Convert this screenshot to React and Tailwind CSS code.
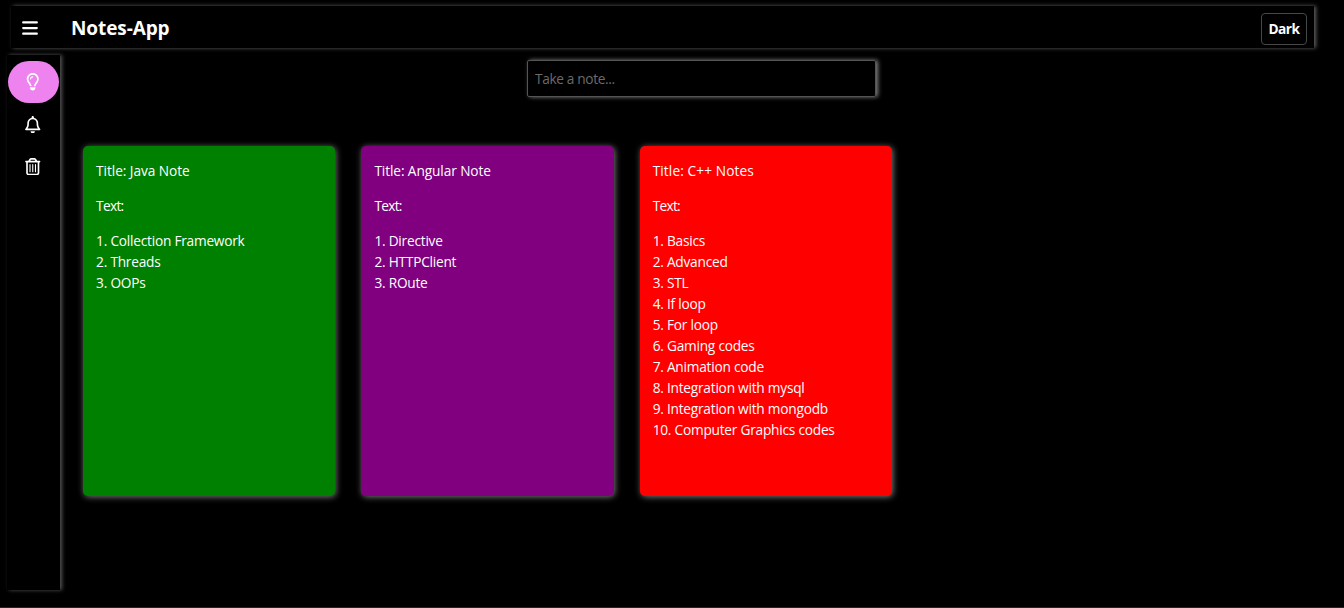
import { FaBars, FaRegLightbulb, FaRegBell, FaRegTrashCan } from "react-icons/fa6";

const notes = [
  { title: "Java Note", titleTracking: "tracking-[-0.06px]", color: "bg-[#008000]", items: ["Collection Framework", "Threads", "OOPs"] },
  { title: "Angular Note", titleTracking: "tracking-[-0.1px]", color: "bg-[#800080]", items: ["Directive", "HTTPClient", "ROute"] },
  {
    title: "C++ Notes",
    titleTracking: "tracking-[0.1px]",
    color: "bg-[#ff0000]",
    items: ["Basics", "Advanced", "STL", "If loop", "For loop", "Gaming codes", "Animation code", "Integration with mysql", "Integration with mongodb", "Computer Graphics codes"],
  },
];

function Note({ title, titleTracking, color, items }) {
  return (
    <article className={`h-[350px] w-[252.2px] rounded-[5px] px-[13px] pt-[14px] text-[13.7px] leading-[21px] tracking-[-0.23px] text-white shadow-[1px_1px_6px_#777777] ${color}`}>
      <p className={titleTracking}>Title: {title}</p>
      <p className="my-[14px] tracking-[-0.7px]">Text:</p>
      {items.map((item, i) => (
        <p key={item}>{`${i + 1}. ${item}`}</p>
      ))}
    </article>
  );
}

export default function App() {
  return (
    <div className="h-[608px] overflow-hidden border-b border-[#242424] bg-black pt-[6px] font-['Open_Sans','Noto_Sans',sans-serif] text-white">
      <header className="ml-[11px] flex h-[41.5px] w-[1303px] items-center pl-[11px] pr-[7px] shadow-[2px_0_4px_#606060]">
        <FaBars className="mt-[3px] h-[18px] w-4" />
        <h1 className="ml-[33px] mt-[4px] text-[19px] font-bold leading-none tracking-[-0.1px]">Notes-App</h1>
        <button className="ml-auto mt-[4px] h-8 w-[46px] rounded-[4px] border border-[#484848] pt-px text-[13.7px] font-bold tracking-[-0.5px]">Dark</button>
      </header>
      <div className="mt-[7.5px] flex">
        <aside className="ml-[7px] flex h-[535px] w-[53px] flex-col items-center pr-[1px] pt-[6px] shadow-[2px_0_4px_#555555]">
          <button className="flex h-[42px] w-[51px] items-center justify-center rounded-[21px] bg-[#ee82ee]"><FaRegLightbulb className="size-[17.5px]" /></button>
          <button className="flex h-[42px] w-[51px] items-center justify-center pt-px"><FaRegBell className="size-[17.5px]" /></button>
          <button className="flex h-[42px] w-[51px] items-center justify-center pt-px"><FaRegTrashCan className="size-[17.5px]" /></button>
        </aside>
        <main className="ml-[23.1px] flex flex-col">
          <input placeholder="Take a note..." className="ml-[443.9px] mt-[5px] h-[37px] w-[349px] rounded-[2px] border border-[#555] px-[7px] text-[13.7px] tracking-[-0.35px] shadow-[2px_0_4px_#808080] placeholder:text-[#6b6b6b]" />
          <div className="mt-[49px] flex gap-[26.1px]">
            {notes.map((note) => (
              <Note key={note.title} {...note} />
            ))}
          </div>
        </main>
      </div>
    </div>
  );
}
